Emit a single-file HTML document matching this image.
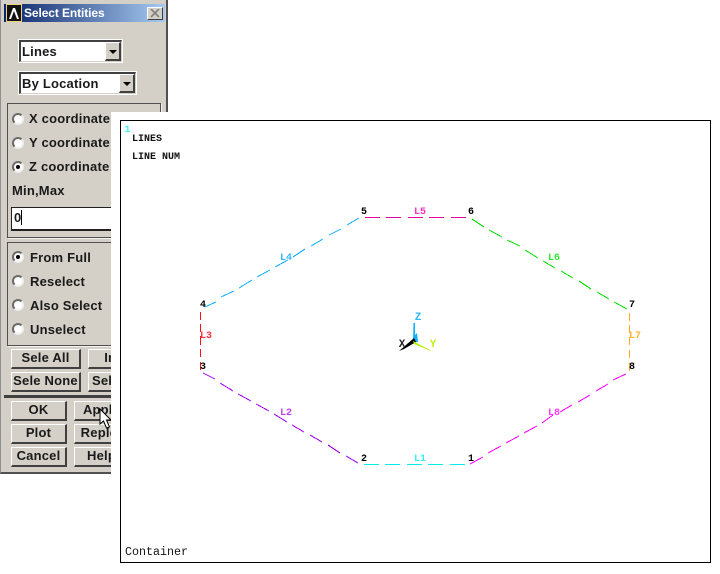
<!DOCTYPE html>
<html><head><meta charset="utf-8">
<style>
html,body{margin:0;padding:0;background:#fff;width:720px;height:574px;overflow:hidden}
*{box-sizing:border-box}
.a{position:absolute}
#dlg{left:0;top:0;width:168px;height:474px;background:#d4d0c8;border-right:2px solid #505050;border-bottom:2px solid #505050;border-left:1px solid #909090}
.t{position:absolute;font:bold 13px/16px "Liberation Sans",sans-serif;color:#1a1a1a;white-space:nowrap;letter-spacing:.2px}
.btn{position:absolute;background:#d4d0c8;border-top:1px solid #fff;border-left:1px solid #fff;border-right:2px solid #404040;border-bottom:2px solid #404040;font:bold 13px/16px "Liberation Sans",sans-serif;color:#1a1a1a;text-align:center;letter-spacing:.2px;white-space:nowrap;overflow:hidden}
.sel{position:absolute;background:#fff;border:2px solid #404040;border-right:1px solid #d4d0c8;border-bottom:1px solid #d4d0c8;outline:1px solid #fff}
.arr{position:absolute;background:#d4d0c8;border-top:1px solid #fff;border-left:1px solid #fff;border-right:2px solid #404040;border-bottom:2px solid #404040}
.arr:after{content:"";position:absolute;left:3px;top:7px;border:4px solid transparent;border-top:4px solid #000;border-bottom:0}
.grp{position:absolute;border:1px solid #505050;box-shadow:1px 1px 0 #f4f2ee}
.r{position:absolute;width:12px;height:12px;border-radius:50%;background:#fff;border:2px solid #6a6a6a;border-right-color:#eee;border-bottom-color:#eee}
.r.on:after{content:"";position:absolute;left:2px;top:2px;width:4px;height:4px;border-radius:50%;background:#000}
</style></head><body>
<div class="a" id="dlg"></div>
<div class="a" style="left:4px;top:4px;width:161px;height:18px;background:linear-gradient(90deg,#0a246a,#a6caf0)"></div>
<svg class="a" style="left:6px;top:4px" width="17" height="18"><rect width="16" height="18" fill="#f3d27a"/><rect x="1" y="1" width="14" height="16" fill="#111"/><path d="M3 15 L7 4 H9 L13 15 H11 L8 7 L5 15Z" fill="#fff"/></svg>
<div class="t" style="left:24px;top:5px;color:#fff;font-size:12px;letter-spacing:-.1px">Select Entities</div>
<div class="a" style="left:147px;top:7px;width:16px;height:13px;background:#d4d0c8;border-top:1px solid #fff;border-left:1px solid #fff;border-right:1px solid #404040;border-bottom:1px solid #404040"></div>
<svg class="a" style="left:150px;top:9px" width="11" height="10"><path d="M1 0 L9 8 M9 0 L1 8" stroke="#808080" stroke-width="1.6" fill="none"/></svg>

<div class="sel" style="left:19px;top:40px;width:103px;height:22px"></div>
<div class="t" style="left:22px;top:44px">Lines</div>
<div class="arr" style="left:105px;top:42px;width:16px;height:19px"></div>
<div class="sel" style="left:19px;top:72px;width:117px;height:22px"></div>
<div class="t" style="left:22px;top:76px">By Location</div>
<div class="arr" style="left:119px;top:74px;width:16px;height:19px"></div>

<div class="grp" style="left:7px;top:103px;width:154px;height:135px"></div>
<div class="r" style="left:12px;top:113px"></div><div class="t" style="left:29px;top:111px">X coordinate</div>
<div class="r" style="left:12px;top:137px"></div><div class="t" style="left:29px;top:135px">Y coordinate</div>
<div class="r on" style="left:12px;top:161px"></div><div class="t" style="left:29px;top:159px">Z coordinate</div>
<div class="t" style="left:12px;top:183px">Min,Max</div>
<div class="a" style="left:11px;top:207px;width:120px;height:24px;background:#fff;border:1px solid #202020;border-bottom:2px solid #202020"></div>
<div class="t" style="left:14px;top:210px">0</div>
<div class="a" style="left:21px;top:210px;width:1px;height:15px;background:#000"></div>

<div class="grp" style="left:7px;top:242px;width:154px;height:104px"></div>
<div class="r on" style="left:12px;top:251px"></div><div class="t" style="left:30px;top:250px">From Full</div>
<div class="r" style="left:12px;top:275px"></div><div class="t" style="left:30px;top:274px">Reselect</div>
<div class="r" style="left:12px;top:299px"></div><div class="t" style="left:30px;top:298px">Also Select</div>
<div class="r" style="left:12px;top:323px"></div><div class="t" style="left:30px;top:322px">Unselect</div>

<div class="btn" style="left:11px;top:349px;width:70px;height:20px">Sele All</div>
<div class="btn" style="left:88px;top:349px;width:70px;height:20px">Invert</div>
<div class="btn" style="left:11px;top:372px;width:70px;height:20px">Sele None</div>
<div class="btn" style="left:88px;top:372px;width:70px;height:20px;text-align:left;padding-left:3px">Sele Belo</div>
<div class="a" style="left:4px;top:395px;width:162px;height:3px;background:#404040"></div>
<div class="btn" style="left:11px;top:401px;width:56px;height:20px">OK</div>
<div class="btn" style="left:74px;top:401px;width:56px;height:20px">Apply</div>
<div class="btn" style="left:11px;top:424px;width:56px;height:20px">Plot</div>
<div class="btn" style="left:74px;top:424px;width:56px;height:20px">Replot</div>
<div class="btn" style="left:11px;top:447px;width:56px;height:20px">Cancel</div>
<div class="btn" style="left:74px;top:447px;width:56px;height:20px">Help</div>
<svg class="a" style="left:99px;top:408px" width="16" height="24"><path d="M1 1 V16 L4.500 13 L7.500 20 L10.500 19 L7.500 12 H12Z" fill="#fff" stroke="#000" stroke-width="1"/></svg>

<div class="a" style="left:111px;top:112px;width:609px;height:462px;background:#fff"></div>
<div class="a" style="left:120px;top:120px;width:591px;height:443px;border:1px solid #000"></div>

<svg class="a" style="left:0;top:0" width="720" height="574" font-family="'Liberation Mono',monospace" font-size="10">
<g shape-rendering="crispEdges" stroke-width="1" fill="none">
<path stroke="#e600a0" d="M365 217.500H380M386 217.500H401M408 217.500H423M429 217.500H444M451 217.500H466"/>
<path stroke="#00eeee" d="M364 464.500H379M385 464.500H400M407 464.500H422M428 464.500H443M450 464.500H465"/>
<path stroke="#10b0ff" d="M205 307L216 302M221 297L234 291M239 288L252 280M257 277L270 270M275 267L288 260M293 257L305 249M311 246L323 239M329 235L341 229M347 225L359 218"/>
<path stroke="#00e000" d="M472 219L484 227M489 230L502 237M507 240L520 246M525 250L538 258M543 261L555 268M561 271L573 278M579 281L591 289M597 292L609 299M614 302L627 309"/>
<path stroke="#ffa820" d="M629.500 313V321M629.500 325V333M629.500 337V345M629.500 350V358M629.500 363V371"/>
<path stroke="#ff1010" d="M200.500 312V320M200.500 324V332M200.500 336V345M200.500 349V357M200.500 362V370"/>
<path stroke="#a000f0" d="M203 373L215 379M220 383L233 391M238 394L251 401M256 404L269 411M274 414L287 422M292 425L304 432M310 435L322 442M328 445L340 453M346 456L358 463"/>
<path stroke="#ff00ff" d="M470 464L483 457M488 453L501 446M506 443L519 436M524 433L537 426M542 423L553 415M560 412L572 405M578 402L590 395M596 391L608 384M613 380L626 374"/>
</g>
<path d="M413.500 323 H415 V335 L417 333 L418 342 H413Z" fill="#10b0ff"/>
<path d="M414 338 L399 351 L404 349 L416 342Z" fill="#000"/>
<path d="M413 341 L431 350.500 L431 351 L414 344Z" fill="#b8f000"/>
<g text-anchor="middle" font-weight="bold">
<text x="127.500" y="132" fill="#30ffff">1</text>
<text x="147" y="141" fill="#111">LINES</text>
<text x="156" y="159" fill="#111">LINE NUM</text>
<g fill="#000">
<text x="364" y="214">5</text><text x="471" y="214">6</text><text x="632" y="307">7</text><text x="632" y="369">8</text>
<text x="203" y="307">4</text><text x="203" y="369">3</text><text x="364" y="461">2</text><text x="471" y="461">1</text>
</g>
<text x="420" y="214" fill="#ff30c0">L5</text>
<text x="420" y="461" fill="#30f0ff">L1</text>
<text x="286" y="260" fill="#30b8ff">L4</text>
<text x="554" y="260" fill="#30e830">L6</text>
<text x="635" y="338" fill="#ffb030">L7</text>
<text x="206" y="338" fill="#ff3040">L3</text>
<text x="286" y="415" fill="#c040f0">L2</text>
<text x="554" y="415" fill="#ff40f0">L8</text>
<text x="418" y="320" fill="#30b8ff" font-size="11">Z</text>
<text x="402" y="347" fill="#222" font-size="11">X</text>
<text x="433" y="347" fill="#c0f020" font-size="11">Y</text>
</g>
<text x="125" y="555" fill="#111" font-size="11.670">Container</text>
</svg>
</body></html>
